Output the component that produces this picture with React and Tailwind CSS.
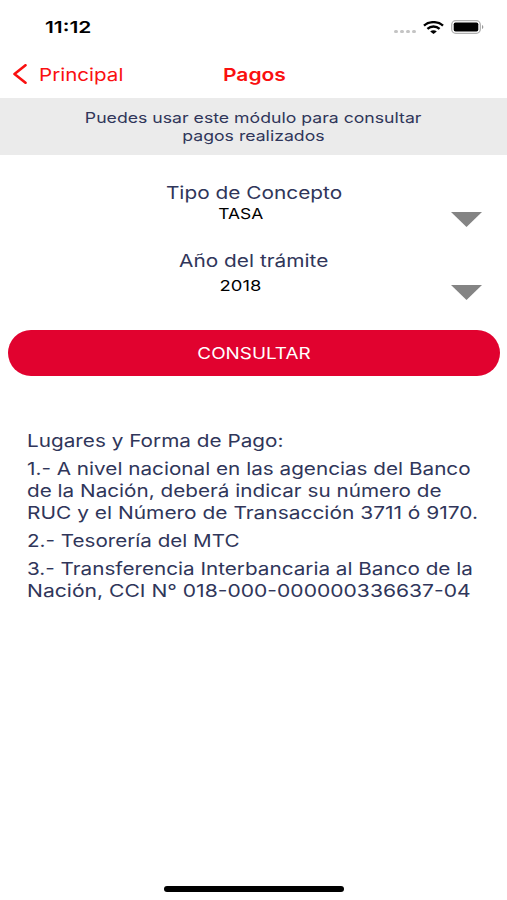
import clsx from 'clsx';

const payment = [
  { id: 'title', lines: [{ text: 'Lugares y Forma de Pago:', width: 'scale-x-[1.185]' }] },
  {
    id: 'bank',
    lines: [
      { text: '1.- A nivel nacional en las agencias del Banco', width: 'scale-x-[1.183]' },
      { text: 'de la Nación, deberá indicar su número de', width: 'scale-x-[1.183]' },
      { text: 'RUC y el Número de Transacción 3711 ó 9170.', width: 'scale-x-[1.195]' },
    ],
  },
  { id: 'treasury', lines: [{ text: '2.- Tesorería del MTC', width: 'scale-x-[1.178]' }] },
  {
    id: 'transfer',
    lines: [
      { text: '3.- Transferencia Interbancaria al Banco de la', width: 'scale-x-[1.182]' },
      { text: 'Nación, CCI N° 018-000-000000336637-04', width: 'scale-x-[1.205]' },
    ],
  },
];

// Wide lettering, one line of text each
function Wide({ className, children }) {
  return <span className={clsx('block w-max whitespace-nowrap', className)}>{children}</span>;
}

function StatusBar() {
  return (
    <div className="flex h-[50px] items-center justify-between pt-1 pr-[23px] pl-[45px]">
      <Wide className="origin-left scale-x-[1.27] pt-px text-[16.5px] font-semibold text-black">11:12</Wide>
      <div className="flex items-center">
        <div className="mt-[9px] mr-[7px] flex gap-[2px]">
          <i className="h-[3px] w-1 rounded-full bg-[#c4c4c4]" />
          <i className="h-[3px] w-1 rounded-full bg-[#c4c4c4]" />
          <i className="h-[3px] w-1 rounded-full bg-[#c4c4c4]" />
          <i className="h-[3px] w-1 rounded-full bg-[#c4c4c4]" />
        </div>
        <svg className="mr-[7px] h-[13px] w-[21px]" viewBox="0 0 21 13" fill="none" stroke="#000" strokeWidth="2.4">
          <path d="M1 4.6C6.2 0 14.8 0 20 4.6" />
          <path d="M4.4 7.8C8 4.7 13 4.7 16.6 7.8" />
          <path d="M7.2 10.4C9 8.7 12 8.7 13.8 10.4L10.5 13Z" fill="#000" stroke="none" />
        </svg>
        <svg className="h-[14px] w-[33px]" viewBox="0 0 33 14">
          <rect x="0.7" y="0.7" width="28.6" height="12.6" rx="4" fill="#fff" stroke="#b0b0b0" strokeWidth="1.3" />
          <rect x="2.7" y="2.5" width="24.6" height="9" rx="1.8" fill="#000" />
          <path d="M31 5C32.8 5.7 32.8 8.3 31 9Z" fill="#999" />
        </svg>
      </div>
    </div>
  );
}

function Field({ label, value, className }) {
  return (
    <div className={clsx('relative flex flex-col items-center', className)}>
      <Wide className="ml-px scale-x-[1.19] text-[17.5px] leading-[22px]">{label}</Wide>
      {value}
    </div>
  );
}

function Arrow({ className }) {
  return (
    <svg className={clsx('absolute right-[25px] h-[15px] w-[31px]', className)} viewBox="0 0 31 15">
      <path d="M0 0H31L15.5 15Z" fill="#848484" />
    </svg>
  );
}

export default function App() {
  return (
    <div className="flex h-[900px] w-[507px] flex-col overflow-hidden bg-white font-['Inter','Liberation_Sans',sans-serif] text-[#30365a]">
      <StatusBar />
      <nav className="grid h-12 grid-cols-3 items-center text-[17.5px] text-[#fa1010]">
        <div className="flex items-center pl-[13px]">
          <svg className="mr-[12px] h-5 w-[14px]" viewBox="0 0 14 20" fill="none" stroke="currentColor" strokeWidth="2.6" strokeLinecap="round" strokeLinejoin="round">
            <path d="M12.5 1.2L1.5 10L12.5 18.8" />
          </svg>
          <Wide className="origin-left scale-x-[1.175] pt-[2px]">Principal</Wide>
        </div>
        <Wide className="mx-auto scale-x-[1.2] pt-[2px] pl-[2px] font-semibold">Pagos</Wide>
      </nav>

      <div className="flex h-[57px] flex-col items-center bg-[#ebebeb] pt-[11px] text-[14.5px] leading-[18px]">
        <Wide className="scale-x-[1.218]">Puedes usar este módulo para consultar</Wide>
        <Wide className="scale-x-[1.218]">pagos realizados</Wide>
      </div>

      <Field
        className="mt-[27px]"
        label="Tipo de Concepto"
        value={
          <>
            <Wide className="-ml-[25px] scale-x-[1.2] text-[14.5px] leading-[20px] text-black">TASA</Wide>
            <Arrow className="top-[30px]" />
          </>
        }
      />
      <Field
        className="mt-[26px]"
        label="Año del trámite"
        value={
          <>
            <Wide className="-ml-[26px] mt-[4px] scale-x-[1.27] text-[14.5px] leading-[20px] text-black">2018</Wide>
            <Arrow className="top-[35px]" />
          </>
        }
      />

      <button className="mr-[7px] ml-2 mt-[34px] flex h-[46px] shrink-0 items-center justify-center rounded-full bg-[#e1022f] text-[16px] text-white">
        <Wide className="scale-x-[1.18]">CONSULTAR</Wide>
      </button>

      <div className="mt-[54px] flex flex-col gap-[6.8px] pl-[27px] text-[17.5px] leading-[21.6px]">
        {payment.map((item) => (
          <p key={item.id}>
            {item.lines.map(({ text, width }) => (
              <Wide key={text} className={clsx('origin-left', width)}>{text}</Wide>
            ))}
          </p>
        ))}
      </div>

      <div className="mr-[163px] ml-auto mt-auto mb-[8px] h-[6px] w-[180px] rounded-full bg-black" />
    </div>
  );
}
